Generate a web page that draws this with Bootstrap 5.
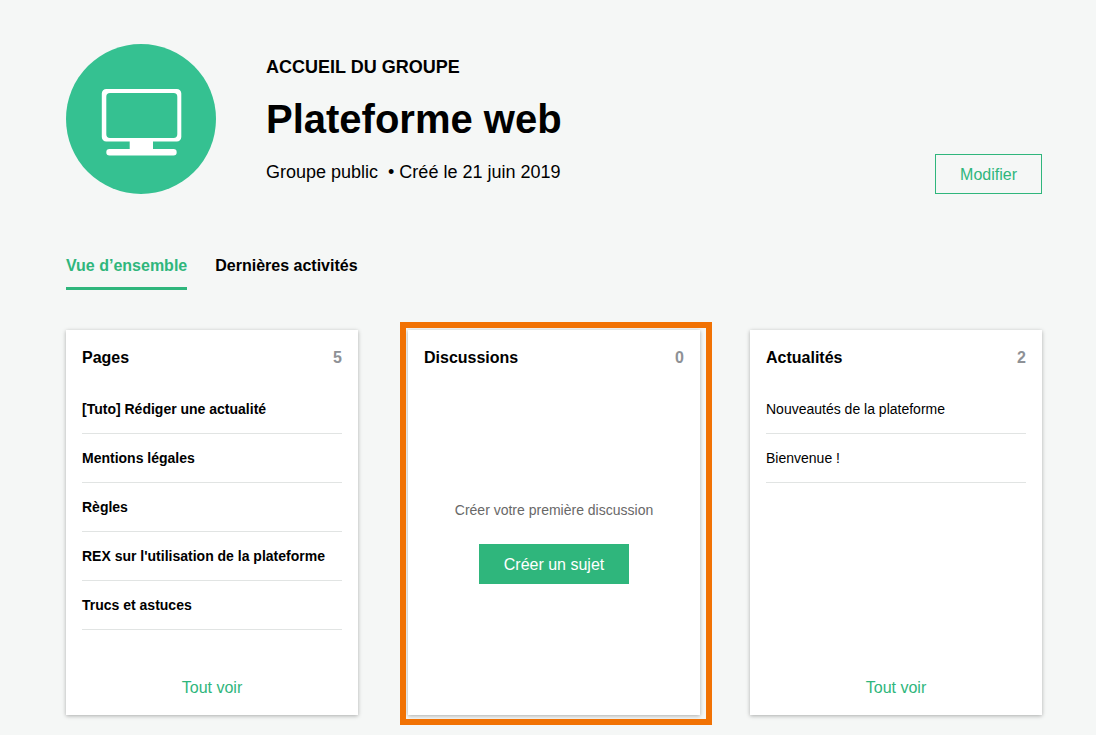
<!DOCTYPE html>
<html lang="fr">
<head>
<meta charset="utf-8">
<meta name="viewport" content="width=device-width, initial-scale=1">
<title>Plateforme web</title>
<link href="https://cdn.jsdelivr.net/npm/bootstrap@5.3.0/dist/css/bootstrap.min.css" rel="stylesheet">
<style>
  :root { --accent: #2fb67c; }
  body { background: #f5f7f6; color: #000; font-family: "Liberation Sans", Arial, sans-serif; font-size: 16px; line-height: 24px; }
  .page { padding: 44px 54px 20px 66px; }
  .group-head { gap: 50px; }
  .group-text { gap: 16px; padding-top: 11px; }
  .group-text p { font-size: 18px; line-height: 24px; }
  .group-text .meta { line-height: 26px; }
  .group-text h1 { font-size: 40px; line-height: 48px; }
  .btn-flat { --bs-btn-border-radius: 0; --bs-btn-padding-x: 24px; --bs-btn-line-height: 24px; --bs-btn-border-color: var(--accent); --bs-btn-color: var(--accent); --bs-btn-hover-border-color: var(--accent); --bs-btn-hover-bg: var(--accent); --bs-btn-hover-color: #fff; padding-top: 8px; padding-bottom: 6px; }
  .btn-fill { --bs-btn-bg: var(--accent); --bs-btn-color: #fff; }
  .tabs { gap: 28px; margin: 60px 0 40px; }
  .tabs .nav-link { padding: 0 0 9px; color: #000; border-bottom: 3px solid transparent; }
  .tabs .nav-link.active { color: var(--accent); border-color: var(--accent); }
  .panels { --bs-gutter-x: 50px; --bs-gutter-y: 30px; }
  .panel { --bs-card-border-width: 0; --bs-card-border-radius: 0; --bs-card-bg: #fff; padding: 16px 16px 15px; box-shadow: 0 1px 4px rgba(0, 0, 0, .3); }
  .panel h2 { font-size: 16px; line-height: 24px; }
  .count { color: #8e9196; }
  .entries { margin: 15px 0 46px; font-size: 14px; line-height: 20px; }
  .entries li { padding: 14px 0; border-bottom: 1px solid #e1e4e3; }
  .entries a { color: #000; }
  .more { color: var(--accent); }
  .empty { gap: 24px; margin-top: 14px; }
  .empty p { font-size: 14px; line-height: 20px; color: #686868; }
  .highlight { position: absolute; inset: -8px -12px -10px -8px; border: 6px solid #f17204; pointer-events: none; }
</style>
</head>
<body>
<main class="page container-fluid">
  <header class="group-head d-flex flex-wrap align-items-start">
    <svg class="flex-shrink-0" width="150" height="150" viewBox="0 0 150 150" aria-hidden="true">
      <circle cx="75" cy="75" r="75" fill="#35c191"/>
      <path fill="#fff" fill-rule="evenodd" d="M40.300 45H110.800a4.500 4.500 0 0 1 4.500 4.500V93a4.500 4.500 0 0 1-4.500 4.500H87V105h20.500a3.200 3.200 0 0 1 0 6.400H43.500a3.200 3.200 0 0 1 0-6.400h20.200V97.500H40.300A4.500 4.500 0 0 1 35.800 93V49.500A4.500 4.500 0 0 1 40.300 45zM44 49a3.700 3.700 0 0 0-3.700 3.700V90.300A3.700 3.700 0 0 0 44 94h63.600a3.700 3.700 0 0 0 3.700-3.700V52.700A3.700 3.700 0 0 0 107.600 49z"/>
    </svg>
    <div class="group-text d-flex flex-column">
      <p class="fw-bold text-uppercase mb-0">Accueil du groupe</p>
      <h1 class="fw-bold mb-0">Plateforme web</h1>
      <p class="meta mb-0">Groupe public&nbsp; • Créé le 21 juin 2019</p>
    </div>
    <button type="button" class="btn btn-flat ms-auto align-self-end">Modifier</button>
  </header>

  <nav class="tabs nav fw-bold" aria-label="Sections du groupe">
    <a class="nav-link active" aria-current="page" href="#">Vue d’ensemble</a>
    <a class="nav-link" href="#">Dernières activités</a>
  </nav>

  <div class="panels row row-cols-1 row-cols-md-3">
    <div class="col">
      <section class="panel card h-100">
        <div class="d-flex justify-content-between fw-bold">
          <h2 class="fw-bold mb-0">Pages</h2><span class="count">5</span>
        </div>
        <ul class="entries list-unstyled fw-bold">
          <li><a class="text-decoration-none" href="#">[Tuto] Rédiger une actualité</a></li>
          <li><a class="text-decoration-none" href="#">Mentions légales</a></li>
          <li><a class="text-decoration-none" href="#">Règles</a></li>
          <li><a class="text-decoration-none" href="#">REX sur l'utilisation de la plateforme</a></li>
          <li><a class="text-decoration-none" href="#">Trucs et astuces</a></li>
        </ul>
        <a class="more text-decoration-none mt-auto mx-auto" href="#">Tout voir</a>
      </section>
    </div>
    <div class="col">
      <section class="panel card h-100">
        <div class="d-flex justify-content-between fw-bold">
          <h2 class="fw-bold mb-0">Discussions</h2><span class="count">0</span>
        </div>
        <div class="empty d-flex flex-column flex-grow-1 align-items-center justify-content-center">
          <p class="mb-0">Créer votre première discussion</p>
          <button type="button" class="btn btn-flat btn-fill">Créer un sujet</button>
        </div>
        <div class="highlight"></div>
      </section>
    </div>
    <div class="col">
      <section class="panel card h-100">
        <div class="d-flex justify-content-between fw-bold">
          <h2 class="fw-bold mb-0">Actualités</h2><span class="count">2</span>
        </div>
        <ul class="entries list-unstyled">
          <li><a class="text-decoration-none" href="#">Nouveautés de la plateforme</a></li>
          <li><a class="text-decoration-none" href="#">Bienvenue !</a></li>
        </ul>
        <a class="more text-decoration-none mt-auto mx-auto" href="#">Tout voir</a>
      </section>
    </div>
  </div>
</main>
<script src="https://cdn.jsdelivr.net/npm/bootstrap@5.3.0/dist/js/bootstrap.bundle.min.js"></script>
</body>
</html>
